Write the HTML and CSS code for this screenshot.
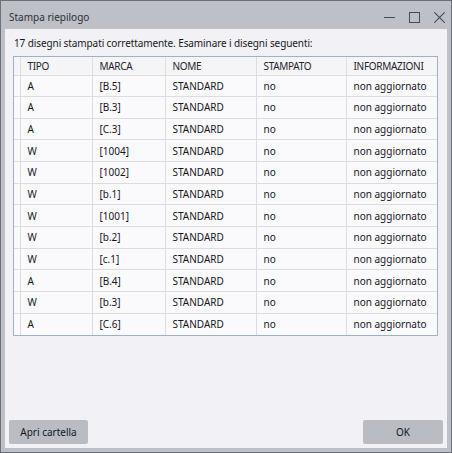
FILE: index.html
```html
<!DOCTYPE html>
<html>
<head>
<meta charset="utf-8">
<link rel="stylesheet" href="styles.css">
</head>
<body>
<div class="window">
  <div class="titlebar">
    <span class="title">Stampa riepilogo</span>
    <div class="controls">
      <svg class="ctl" width="11" height="11" viewBox="0 0 11 11"><path d="M0 5.5H11" stroke="#4a4a50" stroke-width="1" fill="none"/></svg>
      <svg class="ctl" width="11" height="11" viewBox="0 0 11 11"><rect x="0.5" y="0.5" width="10" height="10" stroke="#4a4a50" stroke-width="1" fill="none"/></svg>
      <svg class="ctl" width="11" height="11" viewBox="0 0 11 11"><path d="M0.3 0.3L10.7 10.7M10.7 0.3L0.3 10.7" stroke="#4a4a50" stroke-width="1.1" fill="none"/></svg>
    </div>
  </div>
  <div class="content">
    <p class="msg">17 disegni stampati correttamente. Esaminare i disegni seguenti:</p>
    <div class="grid-wrap">
      <table class="grid">
        <thead>
          <tr><th class="c0"></th><th class="c1">TIPO</th><th class="c2">MARCA</th><th class="c3">NOME</th><th class="c4">STAMPATO</th><th class="c5">INFORMAZIONI</th></tr>
        </thead>
        <tbody>
          <tr><td></td><td>A</td><td>[B.5]</td><td>STANDARD</td><td>no</td><td>non aggiornato</td></tr>
          <tr><td></td><td>A</td><td>[B.3]</td><td>STANDARD</td><td>no</td><td>non aggiornato</td></tr>
          <tr><td></td><td>A</td><td>[C.3]</td><td>STANDARD</td><td>no</td><td>non aggiornato</td></tr>
          <tr><td></td><td>W</td><td>[1004]</td><td>STANDARD</td><td>no</td><td>non aggiornato</td></tr>
          <tr><td></td><td>W</td><td>[1002]</td><td>STANDARD</td><td>no</td><td>non aggiornato</td></tr>
          <tr><td></td><td>W</td><td>[b.1]</td><td>STANDARD</td><td>no</td><td>non aggiornato</td></tr>
          <tr><td></td><td>W</td><td>[1001]</td><td>STANDARD</td><td>no</td><td>non aggiornato</td></tr>
          <tr><td></td><td>W</td><td>[b.2]</td><td>STANDARD</td><td>no</td><td>non aggiornato</td></tr>
          <tr><td></td><td>W</td><td>[c.1]</td><td>STANDARD</td><td>no</td><td>non aggiornato</td></tr>
          <tr><td></td><td>A</td><td>[B.4]</td><td>STANDARD</td><td>no</td><td>non aggiornato</td></tr>
          <tr><td></td><td>W</td><td>[b.3]</td><td>STANDARD</td><td>no</td><td>non aggiornato</td></tr>
          <tr><td></td><td>A</td><td>[C.6]</td><td>STANDARD</td><td>no</td><td>non aggiornato</td></tr>
        </tbody>
      </table>
    </div>
    <div class="spacer"></div>
    <div class="buttons">
      <button class="btn btn-left">Apri cartella</button>
      <button class="btn btn-ok">OK</button>
    </div>
  </div>
</div>
</body>
</html>
```

FILE: styles.css
```css
html, body {
  margin: 0;
  padding: 0;
  background: #bdc0c7;
}
body {
  font-family: "Noto Sans", "Open Sans", sans-serif;
  font-size: 10px;
  color: #16161c;
}
.window {
  box-sizing: border-box;
  width: 452px;
  height: 453px;
  border: 1px solid #6d7077;
  background: #bdc0c7;
  display: flex;
  flex-direction: column;
}
.titlebar {
  height: 28px;
  display: flex;
  align-items: center;
  justify-content: space-between;
  padding: 0 6px 0 8px;
  flex: none;
}
.title {
  color: #2e2f35;
  font-size: 10px;
  margin-top: 3px;
}
.controls {
  display: flex;
  gap: 14px;
  align-items: center;
  margin-top: 4px;
}
.ctl { display: block; }
.content {
  flex: 1;
  margin: 0 4px 4px 4px;
  background: #f2f2f6;
  display: flex;
  flex-direction: column;
  padding: 0 4px 4px 4px;
}
.msg {
  margin: 6px 0 0 5px;
  line-height: 16px;
  height: 16px;
  letter-spacing: -0.1px;
}
.grid-wrap {
  margin: 5px 0 0 4px;
  width: 425px;
  box-sizing: border-box;
  border: 1px solid #9eb1ca;
  background: #ffffff;
}
.grid {
  border-collapse: collapse;
  table-layout: fixed;
  width: 423px;
}
.grid th, .grid td {
  box-sizing: border-box;
  text-align: left;
  font-weight: normal;
  padding: 0 0 0 7px;
  border-right: 1px solid #dcdde3;
  border-bottom: 1px solid #dcdde3;
  white-space: nowrap;
  overflow: hidden;
}
.c0 { width: 6px; }
.c1 { width: 72px; }
.c2 { width: 73px; }
.c3 { width: 91px; }
.c4 { width: 90px; }
.c5 { width: 91px; }
.grid th:last-child, .grid td:last-child { border-right: none; }
.grid tbody tr:last-child td { border-bottom: none; }
.grid th:first-child, .grid td:first-child { padding: 0; }
.grid th {
  height: 18px;
  background: #f5f5f8;
  color: #24242c;
  letter-spacing: -0.3px;
}
.grid td {
  height: 21.67px;
  background: #fafafc;
  color: #16161c;
}
.spacer { flex: 1; }
.buttons {
  display: flex;
  justify-content: space-between;
}
.btn {
  font-family: inherit;
  font-size: 10px;
  color: #16161c;
  width: 80px;
  height: 24px;
  border: none;
  border-radius: 2px;
  background: #b9bcc3;
  padding: 0;
}
.btn-left { width: 79px; }
```
